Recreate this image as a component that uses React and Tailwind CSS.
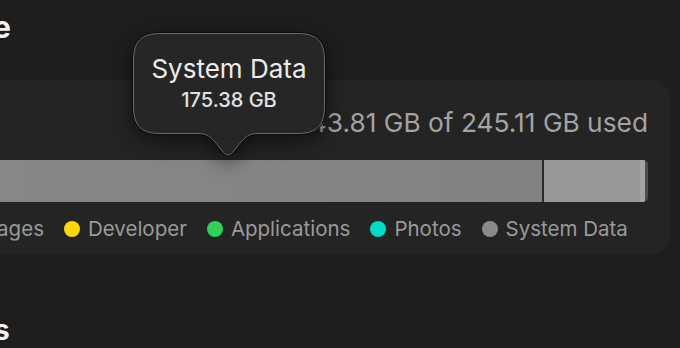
import React from "react";

const legend = [
  { name: "Messages", color: "bg-[#0a84ff]" },
  { name: "Developer", color: "bg-[#ffd60a]" },
  { name: "Applications", color: "bg-[#30d158]" },
  { name: "Photos", color: "bg-[#00dac6]" },
  { name: "System Data", color: "bg-[#8a8a8a]" },
];

const tipPath =
  "M28,0.5 H164 C184,0.5 191.5,8 191.5,28 V73 C191.5,93 184,100.5 164,100.5 H124 C116,100.5 112,104 106,111.5 L99.5,119.5 C96.5,122.8 93.5,122.8 90.5,119.5 L84,111.5 C78,104 74,100.5 66,100.5 H28 C8,100.5 0.5,93 0.5,73 V28 C0.5,8 8,0.5 28,0.5 Z";

function Tooltip() {
  return (
    <div className="absolute left-[131px] top-[31px] w-[196px] h-[127px]">
      <svg
        width="196"
        height="127"
        viewBox="-2 -2 196 127"
        className="absolute inset-0 drop-shadow-[0_6px_10px_rgba(0,0,0,0.55)]"
      >
        <path d={tipPath} fill="none" stroke="#0b0b0b" strokeWidth="3" />
        <path d={tipPath} fill="#262626" stroke="#6c6c6c" strokeWidth="1" />
      </svg>
      <div className="absolute left-[2px] top-[2px] w-[192px] flex flex-col items-center">
        <div className="mt-[22px] h-[28px] leading-[28px] text-[26px] text-[#ececec]">
          System Data
        </div>
        <div className="mt-[5px] h-[24px] leading-[24px] text-[20px] font-medium text-[#e2e2e2]">
          175.38 GB
        </div>
      </div>
    </div>
  );
}

export default function App() {
  return (
    <div className="relative w-[680px] h-[348px] overflow-hidden bg-[#1e1e1e] font-['Inter','Noto_Sans',sans-serif]">
      <div className="flex flex-col w-[1000px] -ml-[260px]">
        <div className="ml-[156px] pt-[9px] h-[45px] leading-[36px] text-[30px] font-bold text-[#f2f2f2]">
          Storage
        </div>
        <div className="ml-[160px] mt-[35px] w-[770px] rounded-[18px] bg-[#242424] pl-[22px] pr-[22px] pt-[27px] pb-[11px] flex flex-col">
          <div className="h-[32px] leading-[32px] text-[26.3px] text-[#a3a3a3] flex justify-end">
            243.81 GB of 245.11 GB used
          </div>
          <div className="mt-[21px] h-[42px] flex rounded-r-[5px] overflow-hidden">
            <div className="flex-1 bg-gradient-to-r from-[#888888] to-[#828282]" />
            <div className="w-[2px] bg-[#2c2c2c]" />
            <div className="w-[96px] bg-[#979797]" />
            <div className="w-[5px] bg-[#a3a3a3]" />
            <div className="w-[3px] bg-[#4e4e4e]" />
          </div>
          <div className="mt-[13px] h-[28px] flex items-center gap-[20px] -ml-[1px]">
            {legend.map((l) => (
              <div key={l.name} className="flex items-center gap-[8px]">
                <span className={`w-[16px] h-[16px] rounded-full ${l.color}`} />
                <span className="leading-[28px] text-[20.5px] text-[#9a9a9a]">{l.name}</span>
              </div>
            ))}
          </div>
        </div>
        <div className="mt-[59px] ml-[14px] h-[34px] leading-[34px] text-[28px] font-bold text-[#f2f2f2]">
          Recommendations
        </div>
      </div>
      <Tooltip />
    </div>
  );
}
